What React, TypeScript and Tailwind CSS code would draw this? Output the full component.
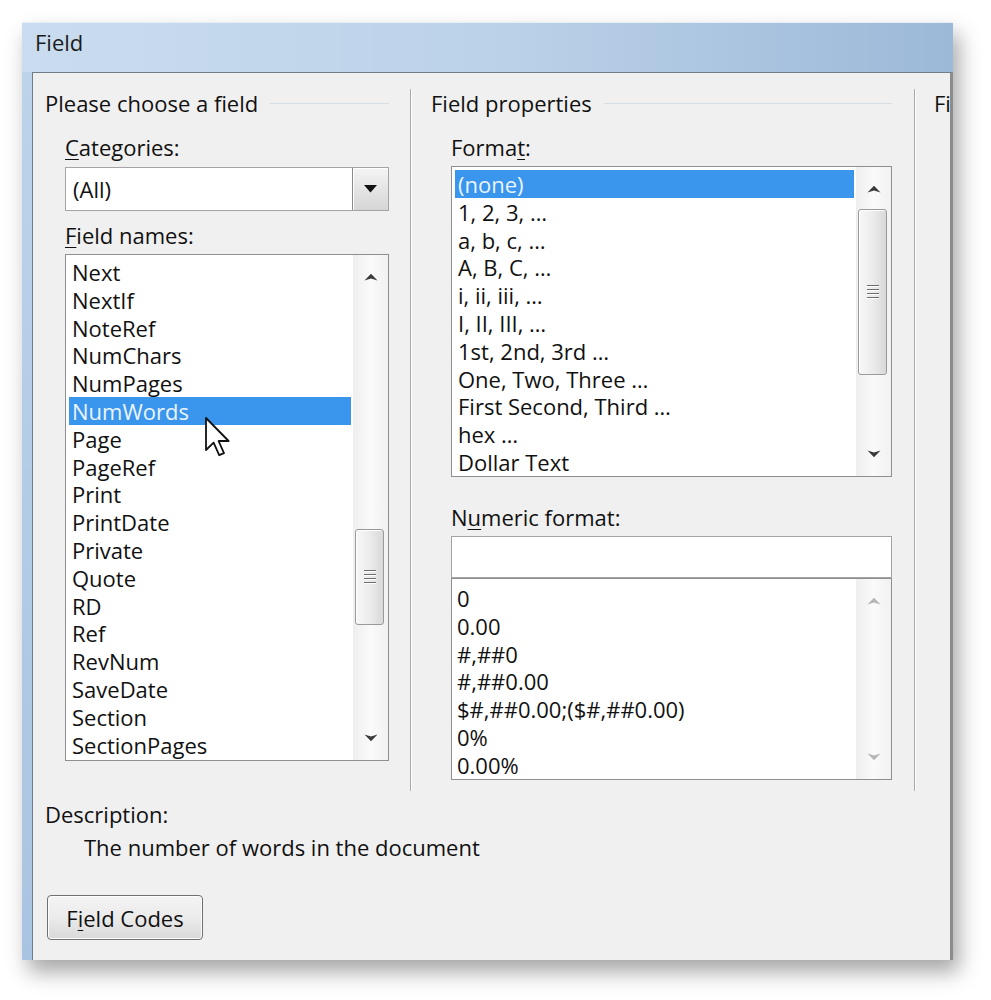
const fieldNames = [
  "Next",
  "NextIf",
  "NoteRef",
  "NumChars",
  "NumPages",
  "NumWords",
  "Page",
  "PageRef",
  "Print",
  "PrintDate",
  "Private",
  "Quote",
  "RD",
  "Ref",
  "RevNum",
  "SaveDate",
  "Section",
  "SectionPages",
];

const formats = [
  "(none)",
  "1, 2, 3, …",
  "a, b, c, …",
  "A, B, C, …",
  "i, ii, iii, …",
  "I, II, III, …",
  "1st, 2nd, 3rd …",
  "One, Two, Three …",
  "First Second, Third …",
  "hex …",
  "Dollar Text",
];

const numericFormats = ["0", "0.00", "#,##0", "#,##0.00", "$#,##0.00;($#,##0.00)", "0%", "0.00%"];

function Arrow({ up, faded }: { up?: boolean; faded?: boolean }) {
  return (
    <svg width="14" height="8" viewBox="0 0 14 8" className={faded ? "opacity-35" : ""}>
      {up ? (
        <path d="M0.5 7.5 L7 0.8 L13.5 7.5 L7 5.6 Z" fill="#3a3a3a" />
      ) : (
        <path d="M0.5 0.5 L7 7.2 L13.5 0.5 L7 2.4 Z" fill="#3a3a3a" />
      )}
    </svg>
  );
}

function Scrollbar({ thumbTop, thumbHeight, faded }: { thumbTop?: number; thumbHeight?: number; faded?: boolean }) {
  return (
    <div className="relative w-[35px] shrink-0 bg-gradient-to-r from-[#eeeeee] via-[#fafafa] to-[#f1f1f1]">
      <div className="absolute left-0 right-0 top-[18px] flex justify-center">
        <Arrow up faded={faded} />
      </div>
      <div className="absolute left-0 right-0 bottom-[18px] flex justify-center">
        <Arrow faded={faded} />
      </div>
      {thumbTop !== undefined && (
        <div
          className="absolute left-[2px] w-[29px] rounded-[3px] border border-[#9a9a9a] bg-gradient-to-r from-[#f7f7f7] via-[#ececec] to-[#d9d9d9] shadow-[inset_1px_1px_0_#ffffff] flex items-center justify-center"
          style={{ top: thumbTop, height: thumbHeight }}
        >
          <div className="flex flex-col gap-[2px]">
            <div className="h-[2px] w-[12px] bg-[#6d6d6d] border-b border-white" />
            <div className="h-[2px] w-[12px] bg-[#6d6d6d] border-b border-white" />
            <div className="h-[2px] w-[12px] bg-[#6d6d6d] border-b border-white" />
            <div className="h-[2px] w-[12px] bg-[#6d6d6d] border-b border-white" />
          </div>
        </div>
      )}
    </div>
  );
}

function Cursor() {
  return (
    <svg width="26" height="42" viewBox="0 0 13 21" className="absolute left-[138px] top-[161px]">
      <path
        d="M1 1 L1 17 L4.8 13.3 L7.6 19.6 L10 18.6 L7.3 12.5 L12.3 12.5 Z"
        fill="#ffffff"
        stroke="#111111"
        strokeWidth="0.9"
        strokeLinejoin="round"
      />
    </svg>
  );
}

function Heading({ text }: { text: string }) {
  return (
    <div className="flex items-center h-[28px]">
      <span>{text}</span>
      <div className="flex-1 ml-[12px] h-px bg-[#d6dde3]" />
    </div>
  );
}

export default function App() {
  return (
    <div
      className="min-h-[1000px] bg-white pt-[22px] pl-[22px] text-[22px] text-[#111] leading-[28px]"
      style={{ fontFamily: '"Open Sans", "Noto Sans", sans-serif' }}
    >
      <div className="w-[931px] h-[938px] flex flex-col bg-gradient-to-b from-[#b9d0e8] to-[#c7d9ec] shadow-[6px_12px_20px_rgba(0,0,0,0.35)] border-t border-[#e6eef7]">
        {/* Title bar */}
        <div className="h-[49px] flex items-center pb-[12px] pl-[13px] text-[22px] text-[#1b1b1b] bg-gradient-to-r from-[#cadcef] via-[#bcd2e9] to-[#9cb9d8]">
          Field
        </div>

        <div className="flex flex-1 min-h-0 pl-[10px] bg-gradient-to-b from-[#bcd3ea] to-[#a9c4e2]">
          {/* Client area */}
          <div className="flex-1 min-w-0 border-t border-l border-r-[3px] border-[#6f7c8a] border-r-[#8c8c8c] bg-[#f0f0f0] overflow-hidden pl-[12px] pt-[16px]">
            <div className="flex h-[702px]">
              {/* Left column */}
              <div className="w-[344px] shrink-0 flex flex-col">
                <Heading text="Please choose a field" />
                <div className="pl-[20px] flex flex-col">
                  <div className="mt-[16px] h-[28px]">
                    <u className="underline-offset-[3px] decoration-1">C</u>ategories:
                  </div>
                  <div className="mt-[6px] h-[44px] w-[324px] flex border border-[#a4a4a4] bg-white">
                    <div className="flex-1 flex items-center pl-[7px]">(All)</div>
                    <div className="w-[36px] flex items-center justify-center border-l border-[#8a8a8a] bg-gradient-to-b from-[#f4f4f4] to-[#d6d6d6] shadow-[inset_1px_1px_0_#ffffff]">
                      <svg width="13" height="8" viewBox="0 0 13 8">
                        <path d="M0 0 L13 0 L6.5 7.5 Z" fill="#111" />
                      </svg>
                    </div>
                  </div>
                  <div className="mt-[10px] h-[28px]">
                    <u className="underline-offset-[3px] decoration-1">F</u>ield names:
                  </div>
                  <div className="relative mt-[5px] h-[507px] w-[324px] flex border border-[#8e8f8f] bg-white">
                    <div className="flex-1 pt-[3px] pl-[3px] pr-[2px]">
                      {fieldNames.map((n) => (
                        <div
                          key={n}
                          className={`h-[27.8px] leading-[27.8px] pt-[1px] px-[3px] whitespace-nowrap ${
                            n === "NumWords" ? "bg-[#3a95ec] text-[#eaf4ff]" : ""
                          }`}
                        >
                          {n}
                        </div>
                      ))}
                    </div>
                    <Scrollbar thumbTop={274} thumbHeight={96} />
                    <Cursor />
                  </div>
                </div>
              </div>

              {/* Separator */}
              <div className="ml-[21px] w-[2px] shrink-0 border-l border-[#a8a8a8] bg-white" />

              {/* Middle column */}
              <div className="ml-[19px] w-[461px] shrink-0 flex flex-col">
                <Heading text="Field properties" />
                <div className="pl-[20px] flex flex-col">
                  <div className="mt-[16px] h-[28px]">
                    Forma<u className="underline-offset-[3px] decoration-1">t</u>:
                  </div>
                  <div className="mt-[5px] h-[311px] w-[441px] flex border border-[#8e8f8f] bg-white">
                    <div className="flex-1 pt-[3px] pl-[3px] pr-[2px]">
                      {formats.map((f) => (
                        <div
                          key={f}
                          className={`h-[27.8px] leading-[27.8px] pt-[1px] px-[3px] whitespace-nowrap ${
                            f === "(none)" ? "bg-[#3a95ec] text-[#eaf4ff]" : ""
                          }`}
                        >
                          {f}
                        </div>
                      ))}
                    </div>
                    <Scrollbar thumbTop={42} thumbHeight={166} />
                  </div>
                  <div className="mt-[26px] h-[28px]">
                    N<u className="underline-offset-[3px] decoration-1">u</u>meric format:
                  </div>
                  <div className="mt-[5px] h-[42px] w-[441px] border border-[#a4a4a4] bg-white" />
                  <div className="h-[202px] w-[441px] flex border border-[#8e8f8f] bg-white">
                    <div className="flex-1 pt-[5px] pl-[3px] pr-[2px]">
                      {numericFormats.map((f) => (
                        <div key={f} className="h-[27.8px] leading-[27.8px] pt-[1px] px-[2px] whitespace-nowrap">
                          {f}
                        </div>
                      ))}
                    </div>
                    <Scrollbar faded />
                  </div>
                </div>
              </div>

              {/* Separator */}
              <div className="ml-[22px] w-[2px] shrink-0 border-l border-[#a8a8a8] bg-white" />

              {/* Third column, cut off by the window edge */}
              <div className="ml-[18px] shrink-0 whitespace-nowrap">
                <div className="h-[28px]">Fi</div>
              </div>
            </div>

            {/* Description */}
            <div className="mt-[9px] h-[28px]">Description:</div>
            <div className="mt-[5px] h-[28px] pl-[39px]">The number of words in the document</div>

            <button className="mt-[34px] ml-[2px] w-[156px] h-[45px] rounded-[4px] border border-[#707070] bg-gradient-to-b from-[#f4f4f4] via-[#ebebeb] to-[#d9d9d9] shadow-[inset_0_0_0_1px_#fcfcfc] text-[22px] text-[#111]">
              F<u className="underline-offset-[3px] decoration-1">i</u>eld Codes
            </button>
          </div>
        </div>
      </div>
    </div>
  );
}
